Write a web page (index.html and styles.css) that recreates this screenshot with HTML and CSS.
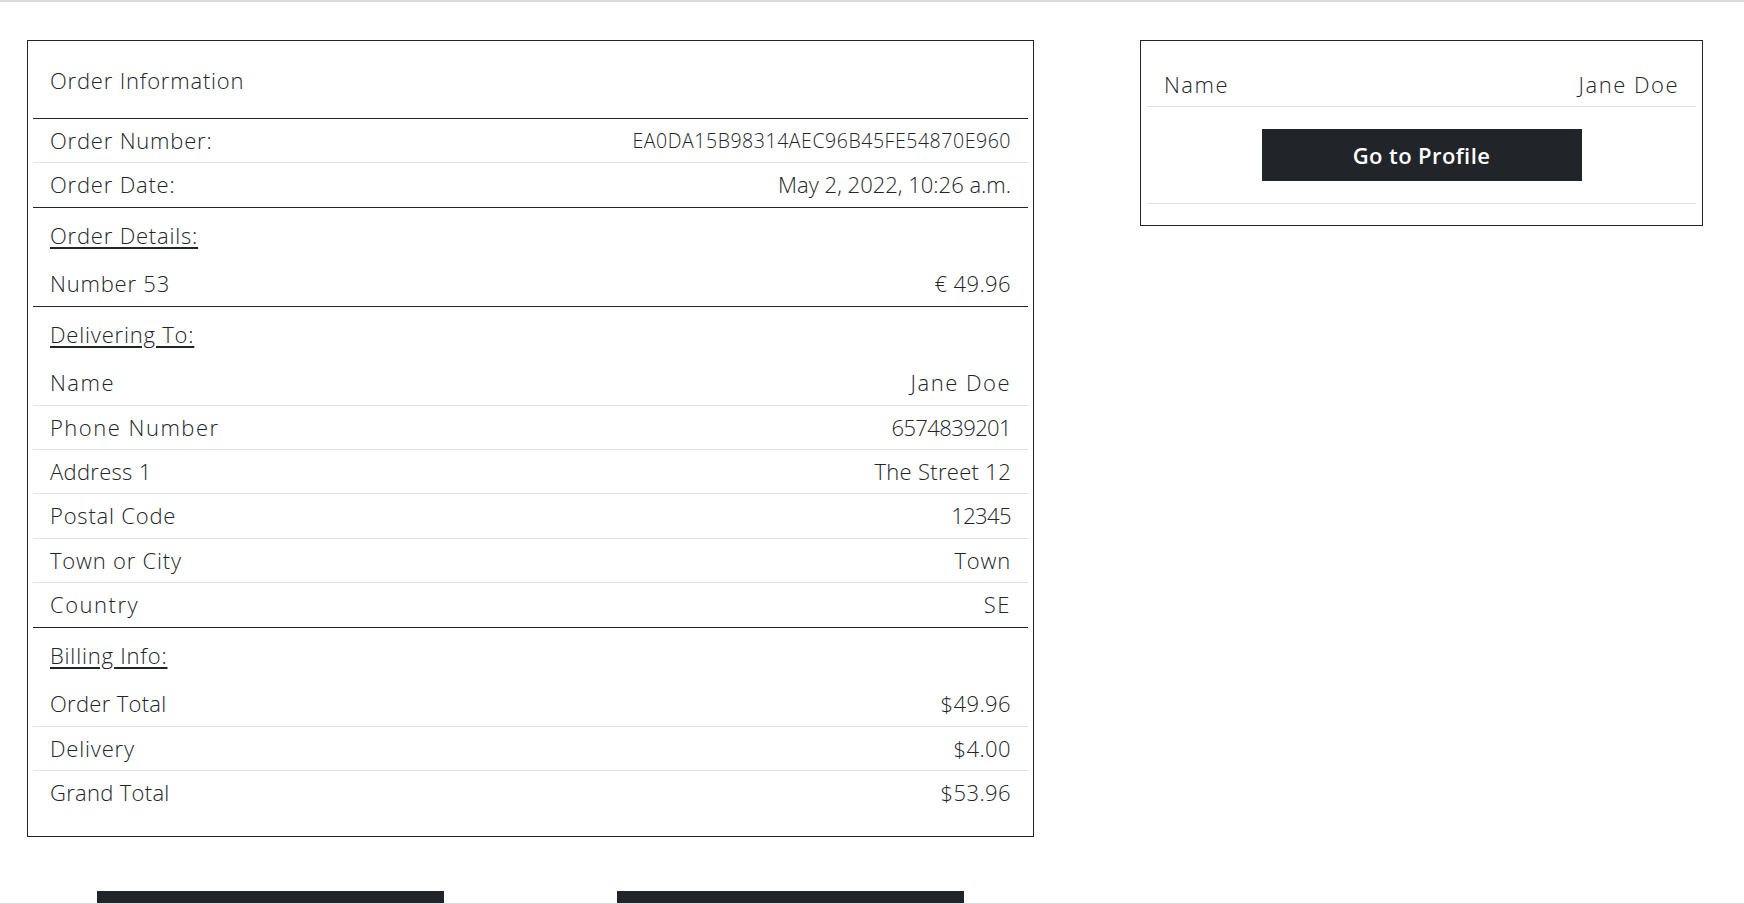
FILE: index.html
```html
<!DOCTYPE html>
<html lang="en">
<head>
<meta charset="utf-8">
<title>Order Information</title>
<link rel="stylesheet" href="styles.css">
</head>
<body>
<div class="viewport">
  <main class="layout">
    <section class="left">
      <div class="card order-card">
        <div class="card-title">Order Information</div>

        <div class="row"><span>Order Number:</span><span class="order-no">EA0DA15B98314AEC96B45FE54870E960</span></div>
        <div class="row end"><span>Order Date:</span><span class="date">May 2, 2022, 10:26 a.m.</span></div>

        <div class="sect-head"><span class="u">Order Details:</span></div>
        <div class="row end"><span>Number 53</span><span class="amt">€ 49.96</span></div>

        <div class="sect-head"><span class="u">Delivering To:</span></div>
        <div class="row"><span class="wide">Name</span><span class="wide">Jane Doe</span></div>
        <div class="row"><span class="wide">Phone Number</span><span class="num">6574839201</span></div>
        <div class="row"><span class="mix">Address 1</span><span class="mix">The Street 12</span></div>
        <div class="row"><span>Postal Code</span><span class="num">12345</span></div>
        <div class="row"><span>Town or City</span><span>Town</span></div>
        <div class="row end"><span class="wide">Country</span><span class="wide">SE</span></div>

        <div class="sect-head"><span class="u">Billing Info:</span></div>
        <div class="row"><span class="mix">Order Total</span><span class="amt">$49.96</span></div>
        <div class="row"><span>Delivery</span><span class="amt">$4.00</span></div>
        <div class="row last"><span class="mix">Grand Total</span><span class="amt">$53.96</span></div>
      </div>

      <div class="actions">
        <a class="btn btn-wide" href="#" aria-label="Keep Shopping"></a>
        <a class="btn btn-wide" href="#" aria-label="Order History"></a>
      </div>
    </section>

    <aside class="right">
      <div class="card profile-card">
        <div class="row"><span class="wide">Name</span><span class="wide">Jane Doe</span></div>
        <div class="btn-row"><a class="btn btn-profile" href="#">Go to Profile</a></div>
      </div>
    </aside>
  </main>
</div>
</body>
</html>
```

FILE: styles.css
```css
* { box-sizing: border-box; }

html, body {
  margin: 0;
  padding: 0;
  background: #ffffff;
}

body {
  font-family: "Open Sans", "Noto Sans", sans-serif;
  font-weight: 300;
  color: #212529;
  letter-spacing: 0.8px;
}

.viewport {
  height: 904px;
  overflow: hidden;
  border-top: 2px solid #dcdcdc;
  border-bottom: 1px solid #dcdcdc;
}

.layout {
  display: flex;
  align-items: flex-start;
  gap: 106px;
  padding: 38px 0 0 27px;
}

.left { width: 1007px; flex: none; }
.right { width: 563px; flex: none; }

.card {
  border: 1px solid #212529;
  background: #ffffff;
}

.order-card {
  padding: 5px 5px 21.7px;
}

.card-title {
  padding: 22px 17px 26px;
  font-size: 22px;
  line-height: 24px;
  border-bottom: 1px solid #212529;
}

.row {
  display: flex;
  justify-content: space-between;
  align-items: center;
  padding: 10px 17px;
  font-size: 22px;
  line-height: 23.4px;
  border-bottom: 1px solid #dee2e6;
}

.row.end { border-bottom-color: #212529; }
.row.last { border-bottom: 0; }

.order-no {
  font-size: 19.5px;
  letter-spacing: 0.55px;
}

.date { letter-spacing: 0; }
.amt { letter-spacing: 0.4px; }
.num { letter-spacing: -0.6px; }
.mix { letter-spacing: 0.3px; }
.wide { letter-spacing: 1.5px; }

.sect-head {
  padding: 16px 17px 15.1px;
  font-size: 22px;
  line-height: 23.4px;
}

.u {
  text-decoration: underline;
  text-decoration-thickness: 1.5px;
  text-underline-offset: 3px;
}

.actions {
  display: flex;
  gap: 173px;
  padding-left: 70px;
  margin-top: 54px;
}

.btn {
  display: flex;
  align-items: center;
  justify-content: center;
  background: #212529;
  color: #ffffff;
  text-decoration: none;
  font-weight: 600;
  font-size: 22px;
  letter-spacing: 0.4px;
}

.btn-wide {
  width: 347px;
  height: 52px;
}

.profile-card {
  padding: 22px 6px 21px;
}

.btn-row {
  display: flex;
  justify-content: center;
  padding: 21.6px 0 22px;
  border-bottom: 1px solid #dee2e6;
}

.btn-profile {
  width: 320px;
  height: 52px;
}
```
